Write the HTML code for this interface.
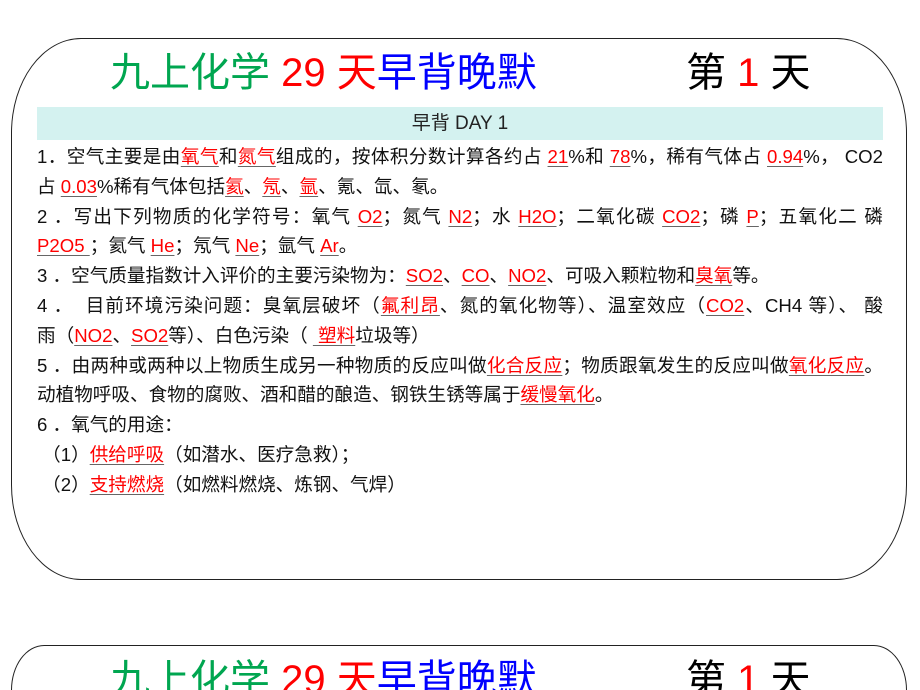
<!DOCTYPE html>
<html style="overflow:hidden;height:690px"><head><meta charset="utf-8"><style>
body{margin:0;width:920px;height:690px;overflow:hidden;background:#fff;font-family:"Liberation Sans","Noto Sans CJK SC",sans-serif;position:relative}
.card{position:absolute;left:11px;width:896px;border:1.5px solid #222;border-radius:70px/95px;box-sizing:border-box}
.title{position:absolute;top:48px;font-size:40px;line-height:42px;white-space:nowrap}
.banner{position:absolute;left:37px;top:107px;width:846px;height:33px;background:#d4f2f0;text-align:center;font-size:19px;line-height:33px;color:#222}
.body{position:absolute;left:37px;top:142px;width:846px;font-size:18.6px;color:#111}
.l{height:29.8px;line-height:29.8px;white-space:nowrap}
.j{text-align:justify;text-align-last:justify}
.r{color:#f00;text-decoration:underline;text-decoration-color:#666;text-underline-offset:3px}
.g{color:#00a650}.rd{color:#f00}.b{color:#00f}
.clip{position:absolute;left:0;top:640px;width:920px;height:50px;overflow:hidden}
</style></head><body>
<div class="card" style="top:38px;height:542px"></div>
<div class="title" style="left:110px;top:52px"><span class="g">九上化学</span> <span class="rd">29 天</span><span class="b">早背晚默</span></div>
<div class="title" style="left:686px;top:52px">第 <span class="rd">1</span> 天</div>
<div class="clip">
<div class="card" style="top:5px;height:45px;border-bottom:none;border-radius:70px 70px 0 0/95px 95px 0 0"></div>
<div class="title" style="left:110px;top:19px"><span class="g">九上化学</span> <span class="rd">29 天</span><span class="b">早背晚默</span></div>
<div class="title" style="left:686px;top:19px">第 <span class="rd">1</span> 天</div>
</div>
<div class="banner">早背 DAY 1</div>
<div class="body">
<div class="l j">1．空气主要是由<span class="r">氧气</span>和<span class="r">氮气</span>组成的，按体积分数计算各约占 <span class="r">21</span>%和 <span class="r">78</span>%，稀有气体占 <span class="r">0.94</span>%， CO2</div>
<div class="l">占 <span class="r">0.03</span>%稀有气体包括<span class="r">氦</span>、<span class="r">氖</span>、<span class="r">氩</span>、氪、氙、氡。</div>
<div class="l j">2 ．写出下列物质的化学符号：氧气 <span class="r">O2</span>；氮气 <span class="r">N2</span>；水 <span class="r">H2O</span>；二氧化碳 <span class="r">CO2</span>；磷 <span class="r">P</span>；五氧化二 磷</div>
<div class="l"><span class="r">P2O5 </span>；氦气 <span class="r">He</span>；氖气 <span class="r">Ne</span>；氩气 <span class="r">Ar</span>。</div>
<div class="l">3 ．空气质量指数计入评价的主要污染物为：<span class="r">SO2</span>、<span class="r">CO</span>、<span class="r">NO2</span>、可吸入颗粒物和<span class="r">臭氧</span>等。</div>
<div class="l j">4 ．&nbsp; 目前环境污染问题：臭氧层破坏（<span class="r">氟利昂</span>、氮的氧化物等）、温室效应（<span class="r">CO2</span>、CH4 等）、 酸</div>
<div class="l">雨（<span class="r">NO2</span>、<span class="r">SO2</span>等）、白色污染（ <span class="r">&nbsp;塑料</span>垃圾等）</div>
<div class="l j">5 ．由两种或两种以上物质生成另一种物质的反应叫做<span class="r">化合反应</span>；物质跟氧发生的反应叫做<span class="r">氧化反应</span>。</div>
<div class="l">动植物呼吸、食物的腐败、酒和醋的酿造、钢铁生锈等属于<span class="r">缓慢氧化</span>。</div>
<div class="l">6 ．氧气的用途：</div>
<div class="l">&nbsp;（1）<span class="r">供给呼吸</span>（如潜水、医疗急救）；</div>
<div class="l">&nbsp;（2）<span class="r">支持燃烧</span>（如燃料燃烧、炼钢、气焊）</div>
</div>
</body></html>
